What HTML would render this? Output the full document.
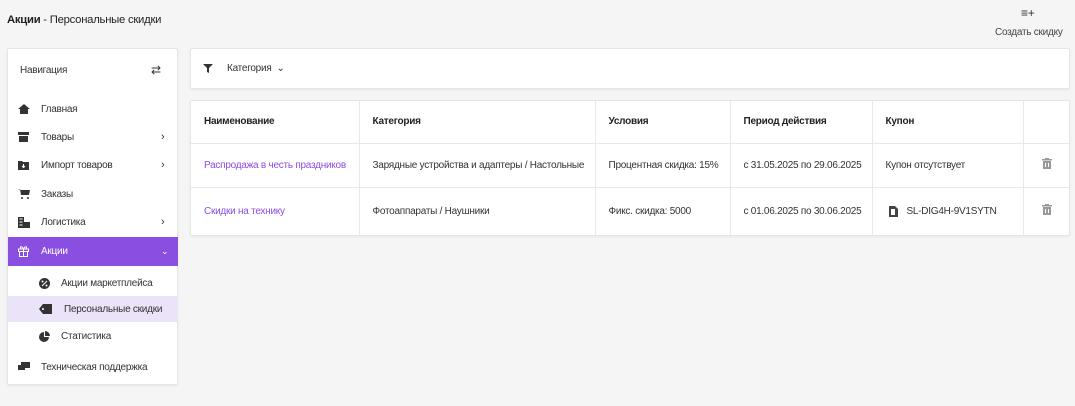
<!DOCTYPE html>
<html><head><meta charset="utf-8"><style>
*{box-sizing:border-box;margin:0;padding:0}
body{width:1075px;height:406px;background:#f5f5f5;font-family:"Liberation Sans",sans-serif;color:#333;font-size:10px;letter-spacing:-0.25px;position:relative;overflow:hidden;white-space:nowrap}
.abs{position:absolute}
.card{position:absolute;background:#fff;border:1px solid #e6e6e6;border-radius:2px;box-shadow:0 1px 2px rgba(0,0,0,.06)}
.nav{left:7px;top:48px;width:171px;height:337px}
.item{position:absolute;left:0;width:170px;height:28px;display:flex;align-items:center;font-size:10px;color:#333}
.item svg{position:absolute;left:10px}
.item span{position:absolute;left:33px}
.chev{position:absolute;left:153px;font-size:11px;font-style:normal}
.sub span{left:53px}
.sub svg{left:31px}
table{border-collapse:collapse;width:100%;table-layout:fixed}
td,th{border-right:1px solid #e8e8e8;border-bottom:1px solid #e8e8e8;text-align:left;padding-left:13px;font-size:10px;font-weight:normal;overflow:hidden}
th{font-weight:bold;height:42px;color:#222}
td{color:#333}
tr td:last-child,tr th:last-child{border-right:none}
.link{color:#8a4fe0}
</style></head><body>
<div class="abs" style="left:7px;top:14px;font-size:11.3px;color:#222"><b>Акции</b> - Персональные скидки</div>
<div class="abs" style="left:1021px;top:6px;font-size:12px;color:#333">≡+</div>
<div class="abs" style="left:995px;top:27px;font-size:10px;color:#444">Создать скидку</div>

<div class="card nav">
<div class="abs" style="left:12px;top:16px;font-size:10px">Навигация</div>
<div class="abs" style="left:143px;top:14px;font-size:12px">⇄</div>
<div class="item" style="top:46px"><svg width="12" height="10" viewBox="0 0 12 10"><path d="M6 0L0 5h2v5h8V5h2z" fill="#333"/></svg><span>Главная</span></div>
<div class="item" style="top:74px"><svg width="11" height="10" viewBox="0 0 11 10"><rect x="0" y="0" width="11" height="3" fill="#333"/><rect x="1" y="4" width="9" height="6" fill="#333"/></svg><span>Товары</span><i class="chev">›</i></div>
<div class="item" style="top:102px"><svg width="11" height="10" viewBox="0 0 11 10"><path d="M0 1h4l1 1h6v8H0z" fill="#333"/><path d="M5.5 4v3M4 6l1.5 1.5L7 6" stroke="#fff" fill="none"/></svg><span>Импорт товаров</span><i class="chev">›</i></div>
<div class="item" style="top:131px"><svg width="12" height="10" viewBox="0 0 12 10"><path d="M0 0h2l1 6h8l1-5H3" fill="#333"/><rect x="3" y="1" width="8" height="5" fill="#333"/><circle cx="4" cy="9" r="1" fill="#333"/><circle cx="10" cy="9" r="1" fill="#333"/></svg><span>Заказы</span></div>
<div class="item" style="top:159px"><svg width="12" height="11" viewBox="0 0 12 11"><rect x="0" y="0" width="6" height="11" fill="#333"/><rect x="6" y="5" width="6" height="6" fill="#333"/><path d="M1.5 2h3M1.5 5h3M1.5 8h3" stroke="#fff"/></svg><span>Логистика</span><i class="chev">›</i></div>
<div class="item" style="top:188px;background:#8a4fe0;color:#fff;height:29px"><svg width="11" height="11" viewBox="0 0 11 11"><path d="M3 3C1 0 4 0 5.5 3C7 0 10 0 8 3" stroke="#fff" fill="none"/><rect x="0.5" y="3" width="10" height="2.5" fill="none" stroke="#fff"/><rect x="1.5" y="5.5" width="8" height="5" fill="none" stroke="#fff"/><path d="M5.5 3v8" stroke="#fff"/></svg><span>Акции</span><i class="chev" style="font-size:9px">⌄</i></div>
<div class="item sub" style="top:220px"><svg width="11" height="11" viewBox="0 0 11 11"><circle cx="5.5" cy="5.5" r="5.5" fill="#333"/><path d="M3 8L8 3" stroke="#fff"/><circle cx="3.5" cy="3.5" r="1" fill="#fff"/><circle cx="7.5" cy="7.5" r="1" fill="#fff"/></svg><span>Акции маркетплейса</span></div>
<div class="item sub" style="top:247px;background:#ebe3f7;height:26px"><svg width="14" height="10" viewBox="0 0 14 10"><path d="M4 0h9v10H4L0 5z" fill="#333"/><circle cx="4" cy="5" r="1" fill="#fff"/></svg><span style="left:56px">Персональные скидки</span></div>
<div class="item sub" style="top:273px"><svg width="11" height="11" viewBox="0 0 11 11"><path d="M5 1A5 5 0 1 0 10 6H5z" fill="#333"/><path d="M6 0v5h5A5 5 0 0 0 6 0z" fill="#333"/></svg><span>Статистика</span></div>
<div class="item" style="top:304px"><svg width="12" height="10" viewBox="0 0 12 10"><rect x="3" y="0" width="9" height="6" fill="#333"/><rect x="0" y="3" width="7" height="5" fill="#333"/></svg><span>Техническая поддержка</span></div>
</div>

<div class="card" style="left:190px;top:48px;width:880px;height:41px">
<svg class="abs" style="left:12px;top:15px" width="10" height="9" viewBox="0 0 10 9"><path d="M0 0h10L6 4v5L4 8V4z" fill="#333"/></svg>
<div class="abs" style="left:36px;top:14px;font-size:10px">Категория &nbsp;⌄</div>
</div>

<div class="card" style="left:190px;top:100px;width:880px;height:136px">
<table>
<tr><th style="width:168px">Наименование</th><th style="width:236px">Категория</th><th style="width:135px">Условия</th><th style="width:142px">Период действия</th><th style="width:151px">Купон</th><th></th></tr>
<tr style="height:44px"><td class="link">Распродажа в честь праздников</td><td>Зарядные устройства и адаптеры / Настольные</td><td>Процентная скидка: 15%</td><td>с 31.05.2025 по 29.06.2025</td><td>Купон отсутствует</td><td><svg style="margin-left:5px" width="10" height="11" viewBox="0 0 10 11"><rect x="0" y="1" width="10" height="1.5" fill="#999"/><rect x="3" y="0" width="4" height="1" fill="#999"/><rect x="1" y="3" width="8" height="8" fill="#999"/><path d="M3.5 5v4M6.5 5v4" stroke="#fff"/></svg></td></tr>
<tr style="height:48px"><td class="link" style="border-bottom:none">Скидки на технику</td><td style="border-bottom:none">Фотоаппараты / Наушники</td><td style="border-bottom:none">Фикс. скидка: 5000</td><td style="border-bottom:none">с 01.06.2025 по 30.06.2025</td><td style="border-bottom:none"><svg style="vertical-align:middle;margin-right:9px;margin-left:3px" width="9" height="11" viewBox="0 0 9 11"><path d="M0 0h6l3 3v8H0z" fill="#444"/><path d="M2 3h4v6H2z" fill="#fff"/></svg>SL-DIG4H-9V1SYTN</td><td style="border-bottom:none"><svg style="margin-left:5px" width="10" height="11" viewBox="0 0 10 11"><rect x="0" y="1" width="10" height="1.5" fill="#999"/><rect x="3" y="0" width="4" height="1" fill="#999"/><rect x="1" y="3" width="8" height="8" fill="#999"/><path d="M3.5 5v4M6.5 5v4" stroke="#fff"/></svg></td></tr>
</table>
</div>
</body></html>
